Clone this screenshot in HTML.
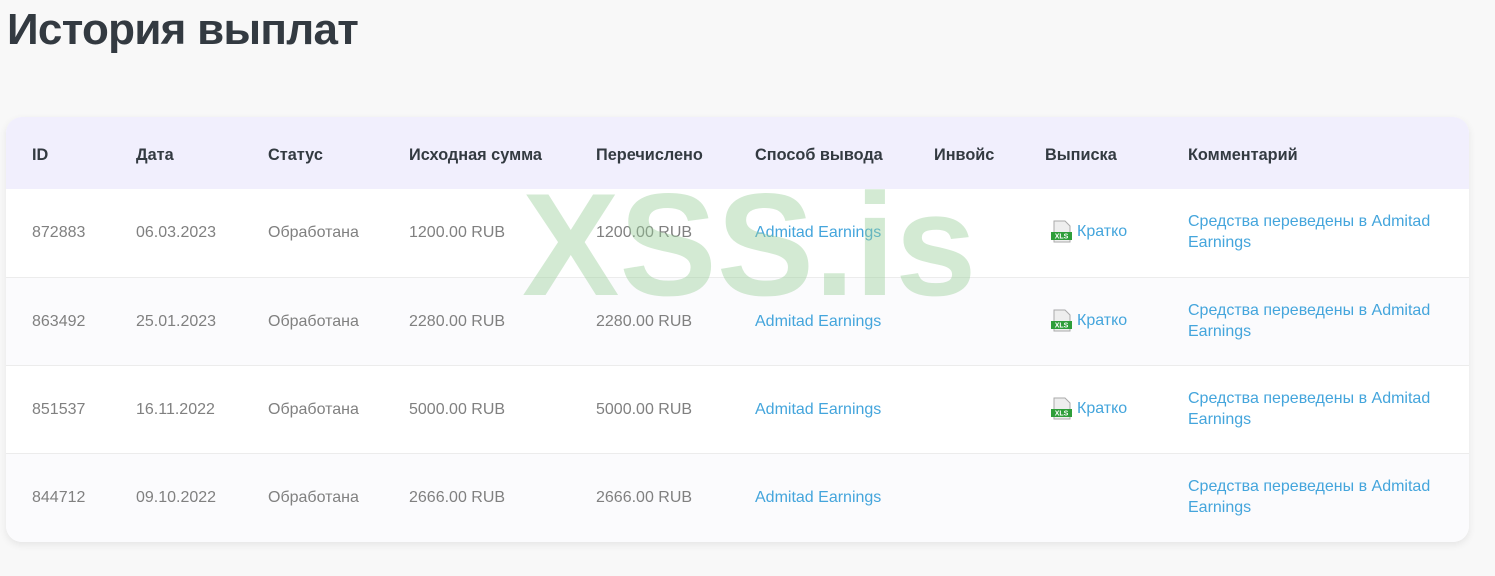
<!DOCTYPE html>
<html><head><meta charset="utf-8"><style>
body{margin:0;width:1495px;height:576px;background:#f8f8f8;font-family:"Liberation Sans",sans-serif;position:relative;overflow:hidden}
h1{position:absolute;left:7px;top:5px;margin:0;font-size:44px;font-weight:bold;color:#333a41;letter-spacing:-0.7px}
.card{position:absolute;left:6px;top:117px;width:1463px;height:425px;background:#fff;border-radius:16px;box-shadow:0 3px 8px rgba(0,0,0,0.08);overflow:hidden}
.hd{position:absolute;left:0;top:0;width:100%;height:72px;background:#f1effd}
.row{position:absolute;left:0;width:100%;height:88px;border-top:1px solid #ececec}
.alt{background:#fbfbfd}
.c{position:absolute;font-size:16px;color:#808080;white-space:nowrap}
.h{font-weight:bold;color:#333a41;font-size:16.3px;top:29px}
.l{color:#44a5dc}
.cm{width:275px;white-space:normal;line-height:21px}
.wm{position:absolute;left:522px;top:172px;font-size:146px;font-weight:bold;color:rgba(150,205,150,0.42);line-height:1;pointer-events:none}
.ic{position:absolute;width:24px;height:26px}
</style></head><body>
<h1>История выплат</h1>
<div class="card">
<div class="hd">
<span class="c h" style="left:26px">ID</span>
<span class="c h" style="left:130px">Дата</span>
<span class="c h" style="left:262px">Статус</span>
<span class="c h" style="left:403px">Исходная сумма</span>
<span class="c h" style="left:590px">Перечислено</span>
<span class="c h" style="left:749px">Способ вывода</span>
<span class="c h" style="left:928px">Инвойс</span>
<span class="c h" style="left:1039px">Выписка</span>
<span class="c h" style="left:1182px">Комментарий</span>
</div>
<div class="row" style="top:72px;border-top:none">
<span class="c" style="left:26px;top:35px">872883</span><span class="c" style="left:130px;top:35px">06.03.2023</span><span class="c" style="left:262px;top:35px">Обработана</span><span class="c" style="left:403px;top:35px">1200.00 RUB</span><span class="c" style="left:590px;top:35px">1200.00 RUB</span><span class="c l" style="left:749px;top:35px">Admitad Earnings</span>
<svg class="ic" style="left:1044px;top:30px" viewBox="0 0 24 26"><path d="M4 2h11l5 5v16H4z" fill="#eee" stroke="#aaa"/><rect x="1" y="13" width="21" height="8" fill="#2e9e3a"/><text x="11.5" y="19.5" font-size="7" fill="#fff" text-anchor="middle" font-family="Liberation Sans" font-weight="bold">XLS</text></svg>
<span class="c l" style="left:1071px;top:34px">Кратко</span>
<span class="c l cm" style="left:1182px;top:22px">Средства переведены в Admitad Earnings</span>
</div>
<div class="row alt" style="top:160px">
<span class="c" style="left:26px;top:35px">863492</span><span class="c" style="left:130px;top:35px">25.01.2023</span><span class="c" style="left:262px;top:35px">Обработана</span><span class="c" style="left:403px;top:35px">2280.00 RUB</span><span class="c" style="left:590px;top:35px">2280.00 RUB</span><span class="c l" style="left:749px;top:35px">Admitad Earnings</span>
<svg class="ic" style="left:1044px;top:30px" viewBox="0 0 24 26"><path d="M4 2h11l5 5v16H4z" fill="#eee" stroke="#aaa"/><rect x="1" y="13" width="21" height="8" fill="#2e9e3a"/><text x="11.5" y="19.5" font-size="7" fill="#fff" text-anchor="middle" font-family="Liberation Sans" font-weight="bold">XLS</text></svg>
<span class="c l" style="left:1071px;top:34px">Кратко</span>
<span class="c l cm" style="left:1182px;top:22px">Средства переведены в Admitad Earnings</span>
</div>
<div class="row" style="top:248px">
<span class="c" style="left:26px;top:35px">851537</span><span class="c" style="left:130px;top:35px">16.11.2022</span><span class="c" style="left:262px;top:35px">Обработана</span><span class="c" style="left:403px;top:35px">5000.00 RUB</span><span class="c" style="left:590px;top:35px">5000.00 RUB</span><span class="c l" style="left:749px;top:35px">Admitad Earnings</span>
<svg class="ic" style="left:1044px;top:30px" viewBox="0 0 24 26"><path d="M4 2h11l5 5v16H4z" fill="#eee" stroke="#aaa"/><rect x="1" y="13" width="21" height="8" fill="#2e9e3a"/><text x="11.5" y="19.5" font-size="7" fill="#fff" text-anchor="middle" font-family="Liberation Sans" font-weight="bold">XLS</text></svg>
<span class="c l" style="left:1071px;top:34px">Кратко</span>
<span class="c l cm" style="left:1182px;top:22px">Средства переведены в Admitad Earnings</span>
</div>
<div class="row alt" style="top:336px">
<span class="c" style="left:26px;top:35px">844712</span><span class="c" style="left:130px;top:35px">09.10.2022</span><span class="c" style="left:262px;top:35px">Обработана</span><span class="c" style="left:403px;top:35px">2666.00 RUB</span><span class="c" style="left:590px;top:35px">2666.00 RUB</span><span class="c l" style="left:749px;top:35px">Admitad Earnings</span>
<span class="c l cm" style="left:1182px;top:22px">Средства переведены в Admitad Earnings</span>
</div>
</div>
<div class="wm">XSS.is</div>
</body></html>
